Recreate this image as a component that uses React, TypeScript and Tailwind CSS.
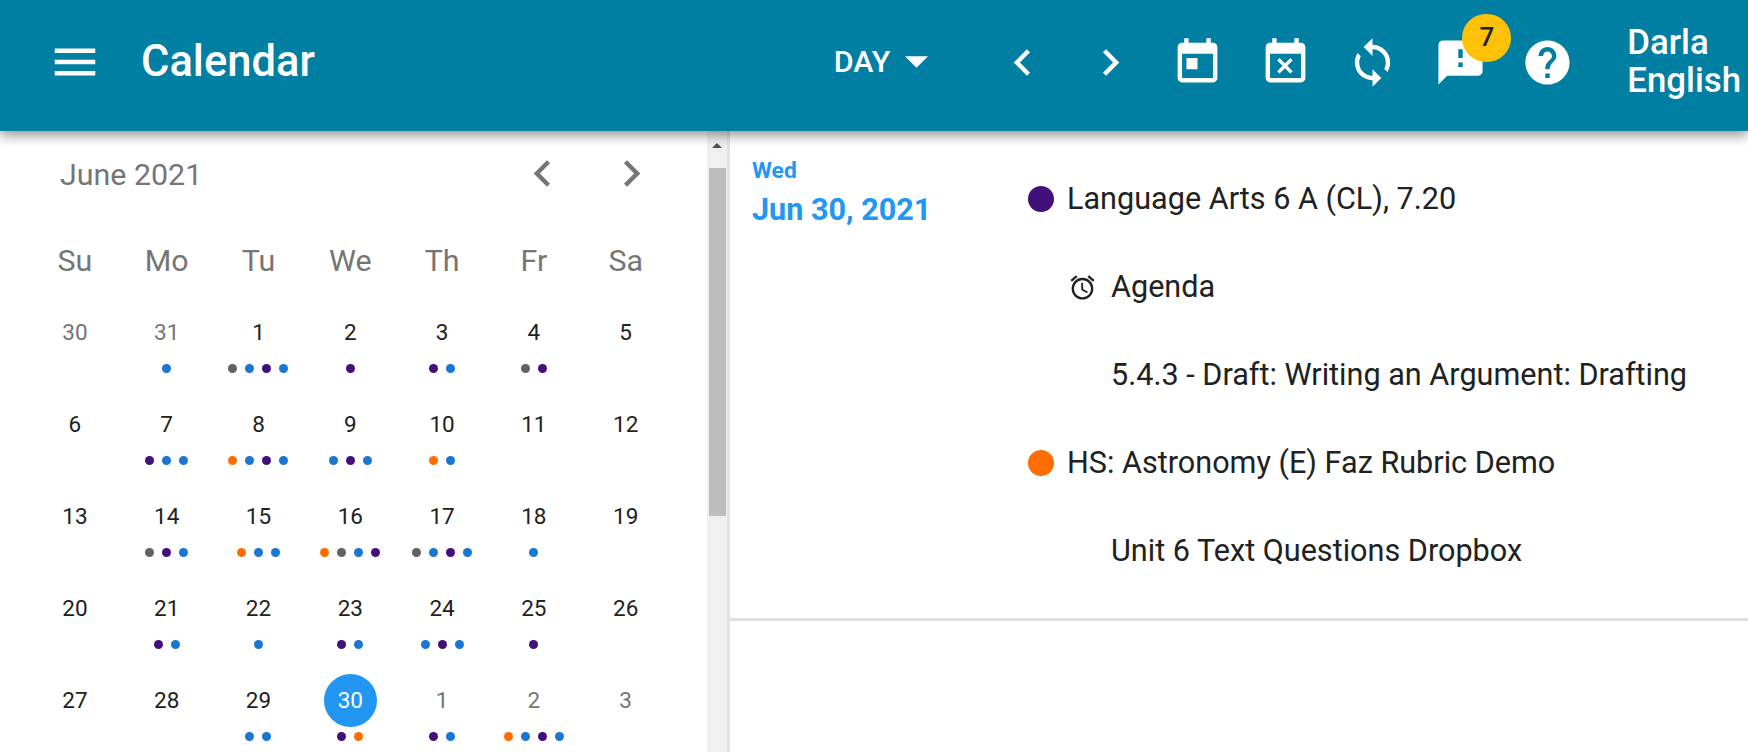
const P = "#42107a"
const B = "#1976d2"
const O = "#ff6d00"
const G = "#616161"

type Day = { n: number; muted?: boolean; today?: boolean; dots?: string[] }

const weekdays = ["Su", "Mo", "Tu", "We", "Th", "Fr", "Sa"]

const weeks: Day[][] = [
  [
    { n: 30, muted: true },
    { n: 31, muted: true, dots: [B] },
    { n: 1, dots: [G, B, P, B] },
    { n: 2, dots: [P] },
    { n: 3, dots: [P, B] },
    { n: 4, dots: [G, P] },
    { n: 5 },
  ],
  [
    { n: 6 },
    { n: 7, dots: [P, B, B] },
    { n: 8, dots: [O, B, P, B] },
    { n: 9, dots: [B, P, B] },
    { n: 10, dots: [O, B] },
    { n: 11 },
    { n: 12 },
  ],
  [
    { n: 13 },
    { n: 14, dots: [G, P, B] },
    { n: 15, dots: [O, B, B] },
    { n: 16, dots: [O, G, B, P] },
    { n: 17, dots: [G, B, P, B] },
    { n: 18, dots: [B] },
    { n: 19 },
  ],
  [
    { n: 20 },
    { n: 21, dots: [P, B] },
    { n: 22, dots: [B] },
    { n: 23, dots: [P, B] },
    { n: 24, dots: [B, P, B] },
    { n: 25, dots: [P] },
    { n: 26 },
  ],
  [
    { n: 27 },
    { n: 28 },
    { n: 29, dots: [B, B] },
    { n: 30, today: true, dots: [P, O] },
    { n: 1, muted: true, dots: [P, B] },
    { n: 2, muted: true, dots: [O, B, P, B] },
    { n: 3, muted: true },
  ],
]

function Icon({ d, className = "w-[53px] h-[53px]" }: { d: string; className?: string }) {
  return (
    <svg viewBox="0 0 24 24" fill="currentColor" className={className}>
      <path d={d} />
    </svg>
  )
}

const chevronLeft = "M15.41 16.59L10.83 12l4.58-4.59L14 6l-6 6 6 6 1.41-1.41z"
const chevronRight = "M8.59 16.59L13.17 12 8.59 7.41 10 6l6 6-6 6-1.41-1.41z"
const alarm =
  "M22 5.72l-4.6-3.86-1.29 1.53 4.6 3.86L22 5.72zM7.88 3.39L6.6 1.86 2 5.71l1.29 1.53 4.59-3.85zM12.5 8H11v6l4.75 2.85.75-1.23-4-2.37V8zM12 4c-4.97 0-9 4.03-9 9s4.03 9 9 9 9-4.03 9-9-4.03-9-9-9zm0 16c-3.87 0-7-3.13-7-7s3.13-7 7-7 7 3.13 7 7-3.13 7-7 7z"

function HeaderButton({ d, children }: { d: string; children?: React.ReactNode }) {
  return (
    <div className="relative w-[87.5px] flex justify-center text-white">
      <Icon d={d} />
      {children}
    </div>
  )
}

function DayCell({ day }: { day: Day }) {
  return (
    <div className="flex flex-col items-center h-[92px]">
      <div
        className={`w-[53px] h-[53px] rounded-full flex items-center justify-center text-[22.5px] ${
          day.today ? "bg-[#2196f3] text-white" : day.muted ? "text-[#757575]" : "text-[#212121]"
        }`}
      >
        {day.n}
      </div>
      <div className="flex gap-2 mt-[5px] h-[9px]">
        {day.dots?.map((c, i) => (
          <span key={i} className="w-[9px] h-[9px] rounded-full" style={{ backgroundColor: c }} />
        ))}
      </div>
    </div>
  )
}

function EventRow({ dot, icon, text }: { dot?: string; icon?: boolean; text: string }) {
  return (
    <div className="flex items-center h-[88px] text-[30.6px] text-[#212121]">
      {dot && <span className="w-[26px] h-[26px] rounded-full mr-[13px]" style={{ backgroundColor: dot }} />}
      {!dot && <span className="w-[39px]" />}
      {icon && <Icon d={alarm} className="w-[29px] h-[29px] ml-[1px] mr-[14px]" />}
      {!dot && !icon && <span className="w-[44px]" />}
      <span>{text}</span>
    </div>
  )
}

export default function App() {
  return (
    <div className="w-[1748px] h-[752px] overflow-hidden bg-white flex flex-col font-['Roboto',sans-serif]">
      <header className="relative z-10 h-[131px] shrink-0 bg-[#007fa3] shadow-[0_4px_12px_rgba(0,0,0,0.45)] flex items-center pl-[48px] pb-[7px] text-white">
        <Icon d="M3 18h18v-2H3v2zm0-5h18v-2H3v2zm0-7v2h18V6H3z" className="w-[54px] h-[54px]" />
        <h1 className="ml-[39px] text-[43.5px] font-medium">Calendar</h1>
        <div className="ml-[519px] flex items-center w-[145px]">
          <span className="text-[30.4px] font-medium">DAY</span>
          <svg viewBox="0 0 24 12" fill="currentColor" className="w-[23px] h-[12px] ml-[15px]">
            <path d="M0 0h24L12 12z" />
          </svg>
        </div>
        <HeaderButton d={chevronLeft} />
        <HeaderButton d={chevronRight} />
        <HeaderButton d="M7 10h5v5H7zM16 1v2H8V1H6v2H5c-1.11 0-1.99.9-1.99 2L3 19c0 1.1.89 2 2 2h14c1.1 0 2-.9 2-2V5c0-1.1-.9-2-2-2h-1V1h-2zm3 18H5V8h14v11z" />
        <HeaderButton d="M9.31 17l2.44-2.44L14.19 17l1.06-1.06-2.44-2.44 2.44-2.44L14.19 10l-2.44 2.44L9.31 10l-1.06 1.06 2.44 2.44-2.44 2.44L9.31 17zM19 3h-1V1h-2v2H8V1H6v2H5c-1.11 0-1.99.9-1.99 2L3 19c0 1.1.89 2 2 2h14c1.1 0 2-.9 2-2V5c0-1.1-.9-2-2-2zm0 16H5V8h14v11z" />
        <HeaderButton d="M12 4V1L8 5l4 4V6c3.31 0 6 2.69 6 6 0 1.01-.25 1.97-.7 2.8l1.46 1.46C19.54 15.03 20 13.57 20 12c0-4.42-3.58-8-8-8zm0 14c-3.31 0-6-2.69-6-6 0-1.01.25-1.97.7-2.8L5.24 7.74C4.46 8.97 4 10.43 4 12c0 4.42 3.58 8 8 8v3l4-4-4-4v3z" />
        <HeaderButton d="M20 2H4c-1.1 0-1.99.9-1.99 2L2 22l4-4h14c1.1 0 2-.9 2-2V4c0-1.1-.9-2-2-2zm-7 12h-2v-2h2v2zm0-4h-2V6h2v4z">
          <span className="absolute left-[46px] top-[-22px] w-[49px] h-[48px] rounded-full bg-[#ffc107] text-[#212121] text-[26px] font-medium flex items-center justify-center">
            7
          </span>
        </HeaderButton>
        <HeaderButton d="M12 2C6.48 2 2 6.48 2 12s4.48 10 10 10 10-4.48 10-10S17.52 2 12 2zm1 17h-2v-2h2v2zm2.07-7.75l-.9.92C13.45 12.9 13 13.5 13 15h-2v-.5c0-1.1.45-2.1 1.17-2.83l1.24-1.26c.37-.36.59-.86.59-1.41 0-1.1-.9-2-2-2s-2 .9-2 2H8c0-2.21 1.79-4 4-4s4 1.79 4 4c0 .88-.36 1.68-.93 2.25z" />
        <div className="ml-[36px] mb-[3px] text-[34.8px] font-medium leading-[38px] whitespace-nowrap">
          Darla
          <br />
          English
        </div>
      </header>

      <main className="flex flex-1 min-h-0">
        <aside className="w-[707px] shrink-0 pl-[29px] overflow-hidden">
          <div className="flex items-center h-[87px] pl-[31px] pr-[49px] text-[#757575]">
            <span className="text-[30.4px] flex-1">June 2021</span>
            <Icon d={chevronLeft} className="w-[53px] h-[53px] mb-[2px]" />
            <Icon d={chevronRight} className="w-[53px] h-[53px] ml-[36px] mb-[2px]" />
          </div>
          <div className="grid grid-cols-[repeat(7,91.8px)] h-[88px] pt-[22px] text-[30.4px] leading-[42px] text-[#757575] text-center">
            {weekdays.map((w) => (
              <div key={w}>{w}</div>
            ))}
          </div>
          {weeks.map((week, i) => (
            <div key={i} className="grid grid-cols-[repeat(7,91.8px)]">
              {week.map((day, j) => (
                <DayCell key={j} day={day} />
              ))}
            </div>
          ))}
        </aside>

        <div className="w-[23px] shrink-0 bg-[#f0f0f0] border-r-[3px] border-[#e3e3e3] flex flex-col">
          <div className="h-[37px] flex justify-center pt-[12px]">
            <div className="w-0 h-0 border-x-[5px] border-x-transparent border-b-[5px] border-b-[#505050]" />
          </div>
          <div className="h-[348px] w-[17px] ml-[2px] bg-[#bdbdbd]" />
        </div>

        <section className="flex-1 min-w-0">
          <div className="flex h-[490px] border-b-[3px] border-[#e0e0e0] pl-[22px]">
            <div className="w-[276px] shrink-0 pt-[25px] text-[#2196f3] font-bold">
              <div className="text-[22.8px] leading-[30px]">Wed</div>
              <div className="text-[30.6px] leading-[40px] mt-[4px]">Jun 30, 2021</div>
            </div>
            <div className="pt-[24px]">
              <EventRow dot={P} text="Language Arts 6 A (CL), 7.20" />
              <EventRow icon text="Agenda" />
              <EventRow text="5.4.3 - Draft: Writing an Argument: Drafting" />
              <EventRow dot={O} text="HS: Astronomy (E) Faz Rubric Demo" />
              <EventRow text="Unit 6 Text Questions Dropbox" />
            </div>
          </div>
        </section>
      </main>
    </div>
  )
}
